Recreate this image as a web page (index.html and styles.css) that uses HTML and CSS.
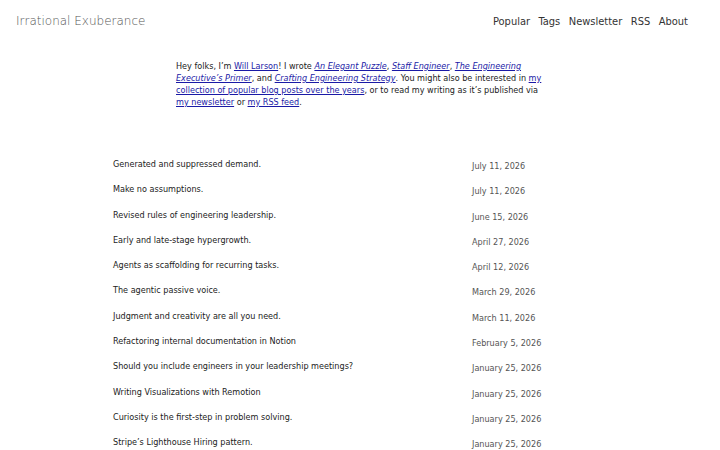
FILE: index.html
```html
<!DOCTYPE html>
<html lang="en">
<head>
    <meta charset="UTF-8">
    <meta name="viewport" content="width=device-width, initial-scale=1.0">
    <title>Irrational Exuberance</title>
    <link rel="stylesheet" href="styles.css">
</head>
<body>
    <header class="site-header">
        <a class="site-title" href="#">Irrational Exuberance</a>
        <nav class="site-nav">
            <a href="#">Popular</a>
            <a href="#">Tags</a>
            <a href="#">Newsletter</a>
            <a href="#">RSS</a>
            <a href="#">About</a>
        </nav>
    </header>

    <section class="intro">
        <p>Hey folks, I’m <a href="#">Will Larson</a>! I wrote <a href="#"><em>An Elegant Puzzle</em></a>, <a href="#"><em>Staff Engineer</em></a>, <a href="#"><em>The Engineering Executive’s Primer</em></a>, and <a href="#"><em>Crafting Engineering Strategy</em></a>. You might also be interested in <a href="#">my collection of popular blog posts over the years</a>, or to read my writing as it’s published via <a href="#">my newsletter</a> or <a href="#">my RSS feed</a>.</p>
    </section>

    <main class="posts">
        <div class="post"><a href="#">Generated and suppressed demand.</a><span class="date">July 11, 2026</span></div>
        <div class="post"><a href="#">Make no assumptions.</a><span class="date">July 11, 2026</span></div>
        <div class="post"><a href="#">Revised rules of engineering leadership.</a><span class="date">June 15, 2026</span></div>
        <div class="post"><a href="#">Early and late-stage hypergrowth.</a><span class="date">April 27, 2026</span></div>
        <div class="post"><a href="#">Agents as scaffolding for recurring tasks.</a><span class="date">April 12, 2026</span></div>
        <div class="post"><a href="#">The agentic passive voice.</a><span class="date">March 29, 2026</span></div>
        <div class="post"><a href="#">Judgment and creativity are all you need.</a><span class="date">March 11, 2026</span></div>
        <div class="post"><a href="#">Refactoring internal documentation in Notion</a><span class="date">February 5, 2026</span></div>
        <div class="post"><a href="#">Should you include engineers in your leadership meetings?</a><span class="date">January 25, 2026</span></div>
        <div class="post"><a href="#">Writing Visualizations with Remotion</a><span class="date">January 25, 2026</span></div>
        <div class="post"><a href="#">Curiosity is the first-step in problem solving.</a><span class="date">January 25, 2026</span></div>
        <div class="post"><a href="#">Stripe’s Lighthouse Hiring pattern.</a><span class="date">January 25, 2026</span></div>
    </main>
</body>
</html>
```

FILE: styles.css
```css
body {
    margin: 0;
    padding: 0;
    background: #fff;
    color: #222;
    font-family: "DejaVu Sans Condensed", "DejaVu Sans", sans-serif;
    font-stretch: condensed;
}

a {
    color: #1a1aa6;
}

.site-header {
    display: flex;
    justify-content: space-between;
    align-items: center;
    padding: 12px 32px 0 16px;
    height: 18px;
}

.site-title {
    font-family: "DejaVu Sans", sans-serif;
    font-stretch: normal;
    font-weight: 200;
    font-size: 12px;
    color: #555;
    text-decoration: none;
}

.site-nav {
    display: flex;
    gap: 8.5px;
}

.site-nav a {
    font-size: 11px;
    color: #333;
    text-decoration: none;
}

.intro {
    width: 368px;
    margin: 30px auto 0;
    font-size: 9px;
    line-height: 12px;
}

.intro p {
    margin: 0;
}

.posts {
    width: 494px;
    margin: 51px auto 0;
}

.post {
    display: grid;
    grid-template-columns: 359px 1fr;
    height: 25.3px;
    font-size: 9px;
}

.post a {
    color: #222;
    text-decoration: none;
}

.date {
    color: #555;
    padding-top: 2px;
}
```
